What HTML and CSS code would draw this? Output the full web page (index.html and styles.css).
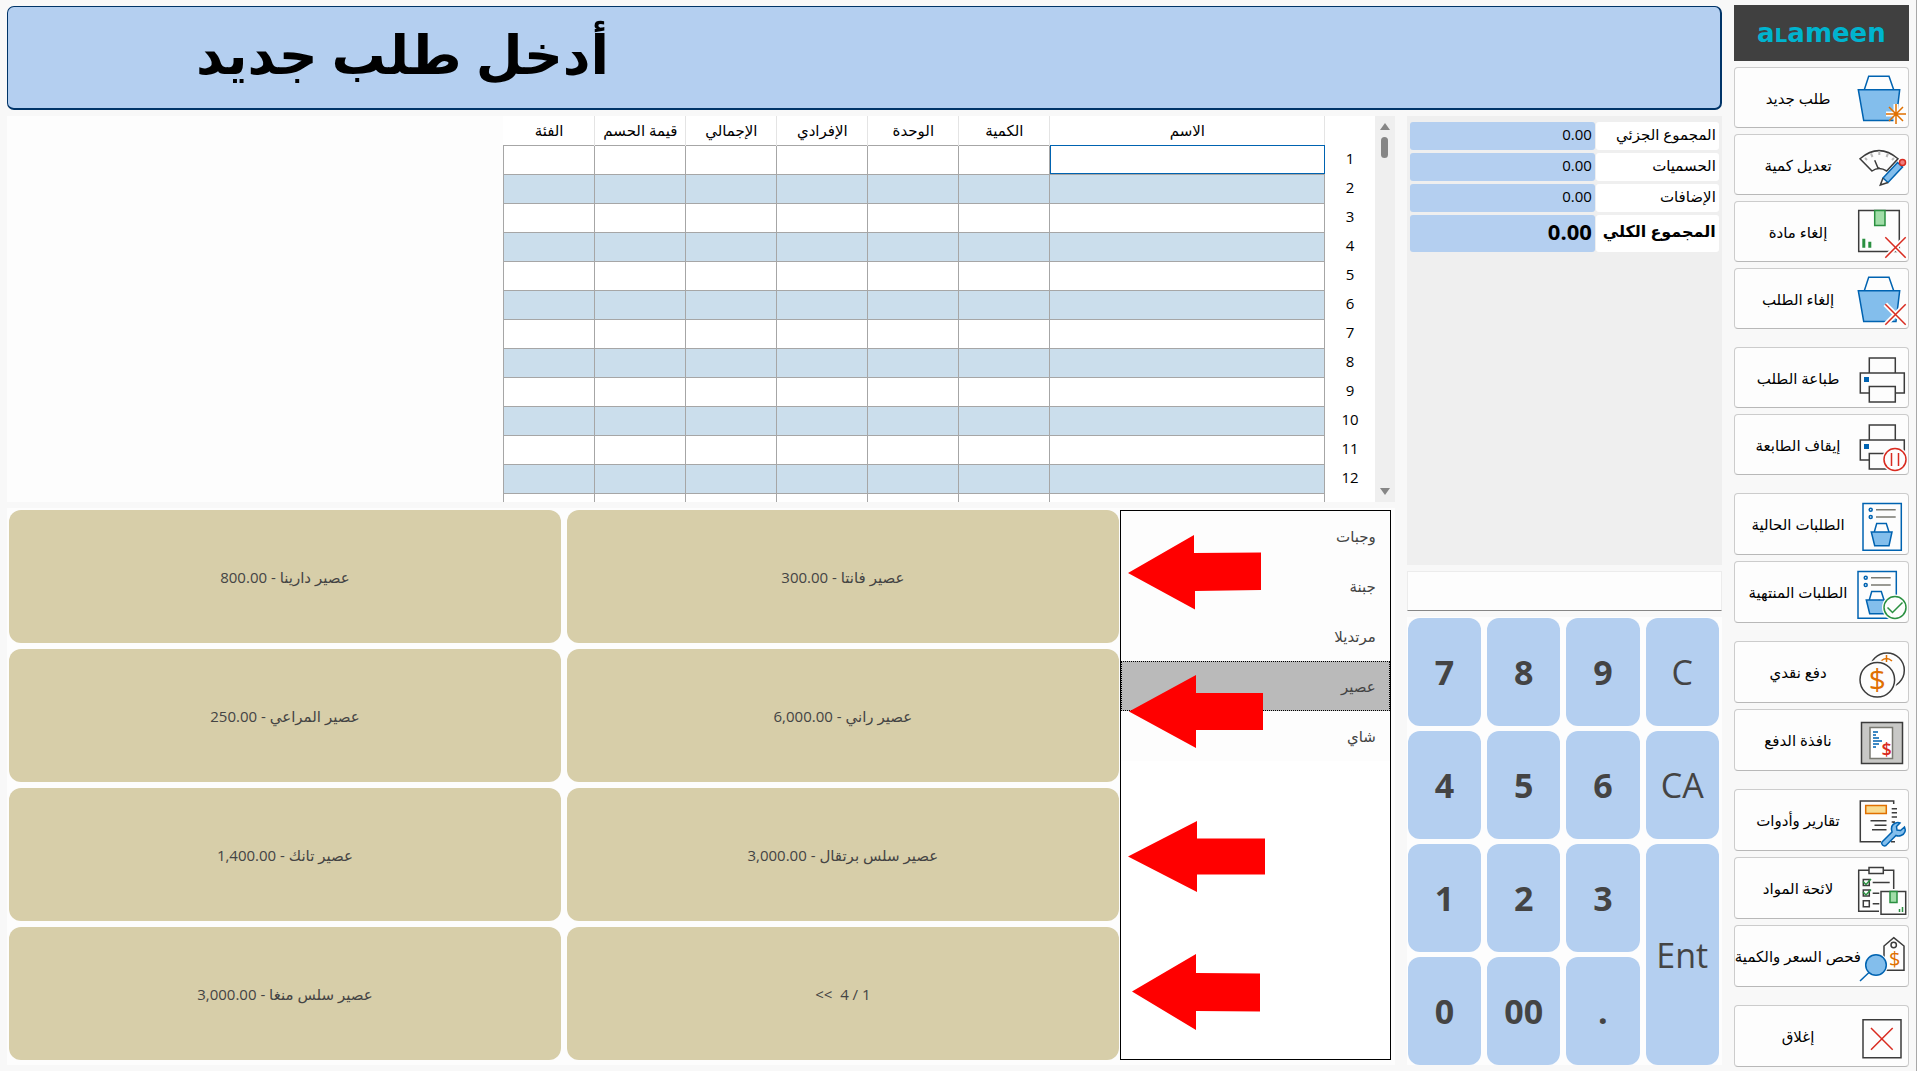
FILE: index.html
```html
<!DOCTYPE html>
<html lang="ar" dir="rtl">
<head>
<meta charset="utf-8">
<title>Alameen</title>
<link rel="stylesheet" href="styles.css">
</head>
<body>
<svg class="defs" aria-hidden="true">
  <defs>
    <g id="basket"><path class="line-blue" d="M7.3 16.7 11.7 3.3H32L36.7 16.7"/><path class="fill-blue" d="M1.3 16.7H42.7L39 47.5H6.7Z"/></g>
    <g id="cross"><path class="halo" d="M28.3 30.3 48.7 50.7M48.7 30.3 28.3 50.7"/><path class="line-red" d="M28.3 30.3 48.7 50.7M48.7 30.3 28.3 50.7"/></g>
    <g id="printer"><path class="line" d="M12.3 20V5H38.3V20M12.3 40H3.3V20H47.3V40H38.3M12.3 33.5H38.3V49H12.3Z"/><path class="solid-blue" d="M7 24h5v5H7z"/></g>
    <g id="order"><path class="line-blue" d="M6 4.5H44.3V51.3H6Z"/><circle class="line-blue" cx="13.7" cy="10.7" r="1.5"/><circle class="line-blue" cx="13.7" cy="18" r="1.5"/><path class="line-grey" d="M19 10.7H38.7M19 18H38.7"/><path class="line-blue" d="M17.3 33 19.7 24.5H29.3L32 33"/><path class="fill-blue" d="M14.3 33H35L32 46.7H17.7Z"/></g>
  </defs>
</svg>
<div class="app">
  <nav class="sidebar">
    <div class="logo" dir="ltr"><span>a<small>L</small>ameen</span></div>
    <button class="action"><svg class="icon" viewBox="0 0 50 50"><use href="#basket"/><path class="halo" d="M39 31V51M29 41H49"/><path class="line-orange" d="M39 31V51M29 41H49M32 34 46 48M46 34 32 48"/></svg><span>طلب جديد</span></button>
    <button class="action"><svg class="icon" viewBox="0 0 50 50"><path class="line" d="M3 18.7Q22 2.5 41 18.7L29.7 31Q22 26 15 31Z"/><path class="ticks" d="M8 18 10 20M14 13.5 15.5 17M22.3 11V15M31 13.5 29.5 17M37 18 35 20"/><path class="line" d="M17.7 20.3 21 28 22.5 28"/><path class="halo" d="M25 43 46 22"/><path class="fill-blue" d="M26 38 40.500 22.500 45.500 27 31 42.500Z"/><path class="line-thin" d="M26 38 23.300 45 31 42.500"/><circle class="eraser" cx="45.500" cy="22.500" r="3"/></svg><span>تعديل كمية</span></button>
    <button class="action"><svg class="icon" viewBox="0 0 50 50"><path class="line" d="M1.700 3.500H42.300V44.500H1.700Z"/><path class="fill-green" d="M17.700 3.500H28V18.500H17.700Z"/><path class="solid-green" d="M5.300 31.700h3v9h-3zM11.300 34.700h3v6h-3z"/><use href="#cross"/></svg><span>إلغاء مادة</span></button>
    <button class="action"><svg class="icon" viewBox="0 0 50 50"><use href="#basket"/><use href="#cross"/></svg><span>إلغاء الطلب</span></button>

    <button class="action group-start"><svg class="icon" viewBox="0 0 50 50"><use href="#printer"/></svg><span>طباعة الطلب</span></button>
    <button class="action"><svg class="icon" viewBox="0 0 50 50"><use href="#printer"/><circle class="badge-halo" cx="38" cy="39.500" r="13"/><circle class="line-red" cx="38" cy="39.500" r="11"/><path class="line-red" d="M34.500 33V46M41.500 33V46"/></svg><span>إيقاف الطابعة</span></button>

    <button class="action tall group-start"><svg class="icon" viewBox="0 0 50 50"><use href="#order"/></svg><span>الطلبات الحالية</span></button>
    <button class="action tall"><svg class="icon" viewBox="0 0 50 50"><use href="#order" x="-5"/><circle class="badge-halo" cx="38" cy="40.500" r="13"/><circle class="line-green" cx="38" cy="40.500" r="11"/><path class="line-green" d="M30.500 40.500 35.500 45.500 45.500 35.500"/></svg><span>الطلبات المنتهية</span></button>

    <button class="action tall group-start"><svg class="icon" viewBox="0 0 50 50"><circle class="line" cx="30" cy="23.300" r="17.300"/><path class="line-orange" d="M24 14Q29.500 9 35 14M29.500 8V15"/><circle class="badge-halo" cx="20.300" cy="32.700" r="19.500"/><circle class="line" cx="20.300" cy="32.700" r="17.300"/><text class="dollar big" x="20.300" y="43">$</text></svg><span>دفع نقدي</span></button>
    <button class="action tall"><svg class="icon" viewBox="0 0 50 50"><path class="frame" d="M4.500 7.500H45.500V48.500H4.500Z"/><path class="sheet" d="M13 12.500H35.500V43.500H13Z"/><path class="line-blue" d="M16 17h5M16 20h3M16 23h6M16 26h9M16 29h6M16 32h3"/><text class="dollar red" x="29.700" y="41">$</text></svg><span>نافذة الدفع</span></button>

    <button class="action tall group-start"><svg class="icon" viewBox="0 0 50 50"><path class="line" d="M36.700 28V6H3.300V46.700H24M34 46.700H38"/><path class="halo" d="M37 9V27"/><path class="line-thin" d="M34.700 13.700H40M34.700 17.700H40M34.700 22H40M34.700 27H38"/><path class="fill-orange" d="M8.700 10.500H29.300V18.500H8.700Z"/><path class="line-thin" d="M13.500 25.700H29.500M17.500 30.300H29.500M15 34.700H29.500"/><path class="fill-blue" d="M25 47 35 37Q33 30 38.500 28Q41 27 43 28L39.500 31.500 40 35 43.500 35.500 47.500 32Q50 38 44 40.500Q41.500 41.500 39 40.500L29 50.500Q27 51.500 25.500 50Q24 48.500 25 47Z"/></svg><span>تقارير وأدوات</span></button>
    <button class="action tall"><svg class="icon" viewBox="0 0 50 50"><path class="line" d="M12 7.300H1.700V48.300H22M26.300 7.300H36.700V26M12 4.500H26.300V10.500H12Z"/><path class="line" d="M6.300 16.500h6v6h-6zM6.300 27h6v6h-6zM6.300 37.700h6v6h-6zM15.700 19.500H32.700M15.700 30.300H22.300M15.700 40.700H22.300"/><path class="line-green" d="M6 18.500 9 21.500 14 16M6 29 9 32 14 26.500"/><path class="line" d="M24 28.500H48.700V51.300H24Z"/><path class="fill-green" d="M33 28.500H40V39.500H33Z"/><path class="line-green" d="M42.500 49V46M45.500 49V44"/></svg><span>لائحة المواد</span></button>
    <button class="action tall"><svg class="icon" viewBox="0 0 50 50"><path class="line" d="M36.700 6.700 47 15V39.300H27V15Z"/><circle class="line" cx="36.700" cy="14" r="2.700"/><text class="dollar" x="37.700" y="35">$</text><circle class="badge-halo" cx="19" cy="34" r="12"/><path class="line-blue" d="M12 41.500 3 50"/><circle class="fill-blue" cx="19" cy="34" r="10.300"/></svg><span>فحص السعر والكمية</span></button>

    <button class="action tall group-start"><svg class="icon" viewBox="0 0 50 50"><path class="line" d="M6 8.700H44V46.700H6Z"/><path class="line-red" d="M14 17 35.700 38.700M35.700 17 14 38.700"/></svg><span>إغلاق</span></button>
  </nav>

  <div class="content">
    <header class="banner"><h1>أدخل طلب جديد</h1></header>
    <div class="workspace">
      <aside class="till">
        <dl class="totals">
          <div><dt>المجموع الجزئي</dt><dd>0.00</dd></div>
          <div><dt>الحسميات</dt><dd>0.00</dd></div>
          <div><dt>الإضافات</dt><dd>0.00</dd></div>
          <div class="grand"><dt>المجموع الكلي</dt><dd>0.00</dd></div>
        </dl>
        <input class="entry" type="text" aria-label="الإدخال">
        <div class="keypad" dir="ltr">
          <button>7</button><button>8</button><button>9</button><button class="word">C</button>
          <button>4</button><button>5</button><button>6</button><button class="word">CA</button>
          <button>1</button><button>2</button><button>3</button><button class="word enter">Ent</button>
          <button>0</button><button>00</button><button>.</button>
        </div>
      </aside>

      <main class="main">
        <section class="order">
          <div class="scrollbar" aria-hidden="true"><i class="up"></i><i class="thumb"></i><i class="down"></i></div>
          <table class="lines">
            <thead><tr><td class="num"></td><th class="name">الاسم</th><th>الكمية</th><th>الوحدة</th><th>الإفرادي</th><th>الإجمالي</th><th>قيمة الحسم</th><th>الفئة</th></tr></thead>
            <tbody>
              <tr><th class="num">1</th><td class="current"></td><td></td><td></td><td></td><td></td><td></td><td></td></tr>
              <tr><th class="num">2</th><td></td><td></td><td></td><td></td><td></td><td></td><td></td></tr>
              <tr><th class="num">3</th><td></td><td></td><td></td><td></td><td></td><td></td><td></td></tr>
              <tr><th class="num">4</th><td></td><td></td><td></td><td></td><td></td><td></td><td></td></tr>
              <tr><th class="num">5</th><td></td><td></td><td></td><td></td><td></td><td></td><td></td></tr>
              <tr><th class="num">6</th><td></td><td></td><td></td><td></td><td></td><td></td><td></td></tr>
              <tr><th class="num">7</th><td></td><td></td><td></td><td></td><td></td><td></td><td></td></tr>
              <tr><th class="num">8</th><td></td><td></td><td></td><td></td><td></td><td></td><td></td></tr>
              <tr><th class="num">9</th><td></td><td></td><td></td><td></td><td></td><td></td><td></td></tr>
              <tr><th class="num">10</th><td></td><td></td><td></td><td></td><td></td><td></td><td></td></tr>
              <tr><th class="num">11</th><td></td><td></td><td></td><td></td><td></td><td></td><td></td></tr>
              <tr><th class="num">12</th><td></td><td></td><td></td><td></td><td></td><td></td><td></td></tr>
              <tr><th class="num"></th><td></td><td></td><td></td><td></td><td></td><td></td><td></td></tr>
            </tbody>
          </table>
        </section>

        <section class="catalog">
          <div class="groups">
            <button>وجبات</button>
            <button>جبنة</button>
            <button>مرتديلا</button>
            <button class="selected">عصير</button>
            <button>شاي</button>
            <svg class="arrows" viewBox="1121 511 270 549" width="270" height="549" aria-hidden="true">
              <path d="M1128 573 1194 535V553L1261 552.500V590L1195 591V609.500Z"/>
              <path d="M1129 711.500 1196 675V693H1263V730H1196V748Z"/>
              <path d="M1128 856.500 1197 821V838.500H1265V874.500H1197V892Z"/>
              <path d="M1132 991.500 1196 954V973L1260 973.500V1011.500L1196 1011V1030Z"/>
            </svg>
          </div>
          <div class="products">
            <button>عصير فانتا - 300.00</button>
            <button>عصير دارينا - 800.00</button>
            <button>عصير راني - 6,000.00</button>
            <button>عصير المراعي - 250.00</button>
            <button>عصير سلس برتقال - 3,000.00</button>
            <button>عصير تانك - 1,400.00</button>
            <button>1 / 4 &nbsp;&gt;&gt;</button>
            <button>عصير سلس منغا - 3,000.00</button>
          </div>
        </section>
      </main>
    </div>
  </div>
</div>
</body>
</html>
```

FILE: styles.css
```css
* { box-sizing: border-box; }

body {
  margin: 0;
  background: #f8f8f8;
  color: #000;
  font-family: "Open Sans", "Noto Sans", "DejaVu Sans", sans-serif;
  font-size: 15px;
}

button { font: inherit; color: inherit; margin: 0; padding: 0; border: 0; }
.defs { position: absolute; width: 0; height: 0; }

.app {
  display: flex;
  gap: 12px;
  height: 100vh;
  min-height: 760px;
  padding: 5px 7px 4px;
  border-right: 1px solid #a8a8a8;
}

/* Sidebar */
.sidebar { display: flex; flex-direction: column; gap: 6px; flex: 0 0 175px; }
.logo {
  display: flex;
  align-items: center;
  justify-content: center;
  flex: 0 0 56px;
  background: #404040;
  color: #00b4cf;
  font: bold 26px/1 "DejaVu Sans", sans-serif;
}
.logo small { font-size: 20px; }
.action {
  display: flex;
  align-items: center;
  flex: 61 1 0;
  min-height: 0;
  border: 1px solid #ccc;
  border-bottom-color: #b8b8b8;
  border-radius: 4px;
  background: #fdfdfd;
  white-space: nowrap;
}
.action.tall { flex-grow: 62; }
.action.group-start { margin-top: 12px; }
.action span { display: flex; justify-content: center; flex: 0 0 126px; margin-right: -4px; }
.icon { flex: 0 0 50px; width: 50px; height: 50px; overflow: visible; margin-right: 1px; }

.line, .line-thin, .line-blue, .line-red, .line-green, .line-orange, .line-grey { fill: none; stroke-width: 1.5; }
.line, .line-thin { stroke: #3c3c3c; }
.line-grey { stroke: #7a7a72; }
.line-blue { stroke: #0063b1; }
.line-red { stroke: #d92b20; }
.line-green { stroke: #2a9040; }
.line-orange { stroke: #e07000; }
.halo { fill: none; stroke: #fdfdfd; stroke-width: 5; }
.badge-halo { fill: #fdfdfd; }
.ticks { fill: none; stroke: #b8b8b8; stroke-width: 2; }
.fill-blue { fill: #83beec; stroke: #0063b1; stroke-width: 1.5; }
.fill-green { fill: #a1dda8; stroke: #2a9040; stroke-width: 1.5; }
.fill-orange { fill: #f8db8f; stroke: #e07000; stroke-width: 1.5; }
.solid-blue { fill: #0063b1; }
.solid-green { fill: #2a9040; }
.eraser { fill: #f08080; stroke: #d92b20; stroke-width: 1.5; }
.frame { fill: #c8c8c6; stroke: #3c3c3c; stroke-width: 1.5; }
.sheet { fill: #fff; stroke: #7a7a72; stroke-width: 1.5; }
.dollar { fill: #e07000; font: 20px "Open Sans", sans-serif; text-anchor: middle; direction: ltr; }
.dollar.big { font-size: 30px; }
.dollar.red { fill: #d92b20; font-size: 18px; font-weight: 600; }

/* Banner */
.content { display: flex; flex-direction: column; gap: 6px; flex: 1; min-width: 0; padding: 1px 0 2px; }
.banner {
  flex: 0 0 104px;
  border: 1px solid #003468;
  border-right-width: 2px;
  border-bottom-width: 2px;
  border-radius: 7px;
  background: #b4cff0;
}
.banner h1 {
  margin: 0;
  padding: 8px 0 0 188px;
  direction: ltr;
  font-size: 54px;
  line-height: 76px;
}
.workspace { display: flex; gap: 12px; flex: 1; min-height: 0; }

/* Totals and keypad */
.till { display: flex; flex-direction: column; gap: 6px; flex: 0 0 315px; }
.totals {
  display: flex;
  flex-direction: column;
  gap: 3px;
  flex: 437 1 0;
  min-height: 0;
  margin: 0;
  padding: 6px 3px;
  background: #efefef;
}
.totals div { display: flex; gap: 1px; height: 28px; line-height: 24px; }
.totals dt { flex: 0 0 123px; padding: 0 3px; border-radius: 3px; background: #fff; white-space: nowrap; }
.totals dd { flex: 1; margin: 0; padding: 0 3px; border-radius: 3px; background: #b4cff0; }
.totals .grand { height: 37px; line-height: 32px; font-size: 16px; font-weight: bold; }
.grand dd { font-size: 22px; }
.entry {
  width: 100%;
  height: 40px;
  border: 1px solid #ececec;
  border-bottom-color: #868686;
  background: #fdfdfd;
  font: inherit;
}
.keypad {
  display: grid;
  grid-template-columns: repeat(4, 1fr);
  grid-template-rows: repeat(4, 1fr);
  gap: 5px 6px;
  flex: 447 1 0;
  min-height: 0;
  padding: 1px 3px 0 1px;
  background: #fdfdfd;
}
.keypad button {
  border-radius: 12px;
  background: #b4cff0;
  color: #444;
  font-size: 34px;
  font-weight: bold;
}
.keypad .word { font-weight: normal; }
.keypad .enter { grid-row: span 2; }

/* Order lines */
.main { display: flex; flex-direction: column; gap: 6px; flex: 1; min-width: 0; }
.order { display: flex; flex: 386 1 0; min-height: 0; overflow: hidden; background: #fdfdfd; }
.scrollbar {
  display: flex;
  flex-direction: column;
  align-items: center;
  flex: 0 0 20px;
  padding: 7px 0;
  background: #efefef;
}
.scrollbar i { display: block; }
.scrollbar .up { border: 5px solid transparent; border-top: 0; border-bottom: 7px solid #868686; }
.scrollbar .thumb { width: 7px; height: 21px; margin: 7px 0 auto; border-radius: 4px; background: #868686; }
.scrollbar .down { border: 5px solid transparent; border-bottom: 0; border-top: 7px solid #868686; }
.lines { align-self: flex-start; table-layout: fixed; width: 871px; border-collapse: collapse; background: #fff; }
.lines th, .lines td { height: 29px; padding: 0; line-height: 20px; font-weight: normal; }
.lines thead th { width: 91px; border-right: 1px solid #e4e4e4; }
.lines thead th.name { width: 275px; }
.lines .num { width: 50px; padding-bottom: 3px; border: 0; }
.lines tbody td { border: 1px solid #a6a6a6; }
.lines tbody tr:nth-child(even) td { background: #cbdeec; }
.lines td.current { outline: 1px solid #0063b1; outline-offset: -1px; }

/* Catalog */
.catalog { display: flex; gap: 1px; flex: 550 1 0; min-height: 0; padding: 2px 2px 5px 4px; background: #fdfdfd; }
.groups {
  position: relative;
  display: flex;
  flex-direction: column;
  flex: 0 0 271px;
  border: 1px solid #000;
  background: #fff;
}
.catalog { padding: 2px 4px 5px 2px; }
.groups button {
  flex: 0 0 50px;
  padding: 0 14px;
  background: #fdfdfd;
  color: #444;
  text-align: right;
}
.groups .selected { border: 1px dotted #000; padding: 0 13px; background: #bababa; }
.arrows { position: absolute; top: 0; left: 0; fill: #f00; }
.products {
  display: grid;
  grid-template-columns: 1fr 1fr;
  grid-template-rows: repeat(4, 1fr);
  gap: 6px;
  flex: 1;
}
.products button { border-radius: 12px; background: #d7cea9; color: #444; }
```
